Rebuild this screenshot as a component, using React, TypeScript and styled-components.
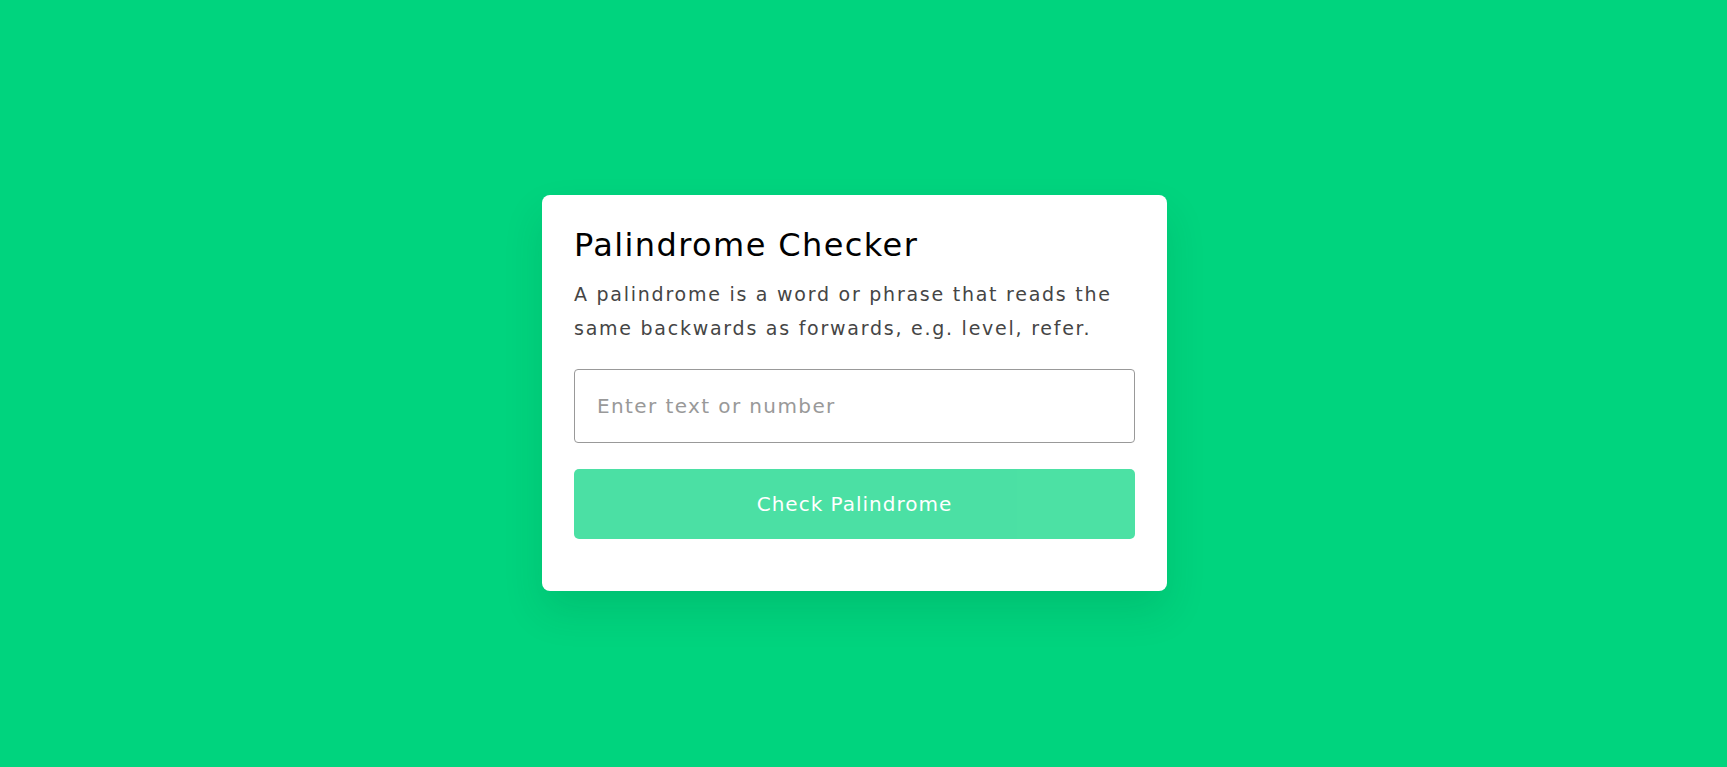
import { useState } from "react"
import styled, { createGlobalStyle } from "styled-components"

const GlobalStyle = createGlobalStyle`
  * {
    box-sizing: border-box;
  }
  body {
    margin: 0;
    font-family: "DejaVu Sans", Inter, sans-serif;
    background: #00d47e;
  }
`

const isPalindrome = (value: string) => {
  const clean = value.toLowerCase().replace(/[^a-z0-9]/g, "")
  return clean.length > 0 && clean === clean.split("").reverse().join("")
}

export default function App() {
  const [text, setText] = useState("")
  const [result, setResult] = useState<string | null>(null)

  const handleCheck = () => {
    setResult(
      isPalindrome(text)
        ? `Yes, "${text}" is a palindrome`
        : `No, "${text}" isn't a palindrome`
    )
  }

  return (
    <Page>
      <GlobalStyle />
      <Card>
        <Title>{"Palindrome Checker"}</Title>
        <Description>
          {
            "A palindrome is a word or phrase that reads the same backwards as forwards, e.g. level, refer."
          }
        </Description>
        <TextInput
          type="text"
          placeholder="Enter text or number"
          value={text}
          onChange={(e) => {
            setText(e.target.value)
            setResult(null)
          }}
        />
        <CheckButton disabled={text.trim() === ""} onClick={handleCheck}>
          {"Check Palindrome"}
        </CheckButton>
        {result && <Result>{result}</Result>}
      </Card>
    </Page>
  )
}

const Page = styled.div`
  min-height: 100vh;
  display: flex;
  align-items: center;
  justify-content: center;
  padding: 19px 18px 0px 0px;
`

const Card = styled.div`
  width: 625px;
  background: #ffffff;
  border-radius: 8px;
  padding: 27px 32px 52px 32px;
  box-shadow: 0 20px 40px rgb(0 60 30 / 0.12);
`

const Title = styled.h1`
  margin: 0;
  font-size: 32px;
  font-weight: 400;
  line-height: 46px;
  letter-spacing: 1.4px;
  color: #000000;
`

const Description = styled.p`
  margin: 9px 0px 0px 0px;
  font-size: 19px;
  line-height: 34px;
  letter-spacing: 1.75px;
  color: #454545;
`

const TextInput = styled.input`
  display: block;
  width: 100%;
  height: 74px;
  margin-top: 24px;
  padding: 0px 22px;
  font-family: inherit;
  font-size: 20px;
  letter-spacing: 1.4px;
  color: #333333;
  border: 1px solid #999999;
  border-radius: 4px;
  outline: none;
  &::placeholder {
    color: #999999;
  }
`

const CheckButton = styled.button`
  display: block;
  width: 100%;
  height: 70px;
  margin-top: 26px;
  border: none;
  border-radius: 5px;
  font-family: inherit;
  font-size: 20px;
  letter-spacing: 1px;
  color: #ffffff;
  background: #00d47e;
  cursor: pointer;
  &:disabled {
    opacity: 0.7;
    cursor: default;
  }
`

const Result = styled.div`
  margin-top: 20px;
  font-size: 18px;
  color: #333333;
`
